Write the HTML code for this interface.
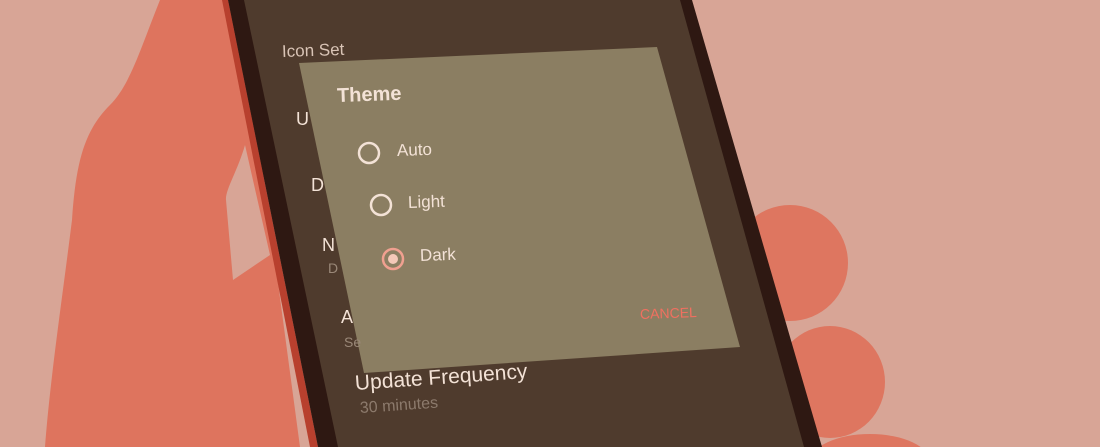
<!DOCTYPE html>
<html><head><style>
html,body{margin:0;padding:0;overflow:hidden}
body{width:1100px;height:447px;overflow:hidden;position:relative;background:#d8a596;font-family:"Liberation Sans",sans-serif}
.t{position:absolute;color:#f3e2d6;white-space:nowrap;transform-origin:left center}
</style></head><body>
<svg width="1100" height="447" style="position:absolute;left:0;top:0">
 <ellipse cx="790" cy="263" rx="58" ry="58" fill="#de7660"/>
 <ellipse cx="830" cy="382" rx="55" ry="56" fill="#de7660"/>
 <ellipse cx="870" cy="462" rx="60" ry="28" fill="#de7660"/>
 <path d="M160,0 L240,0 L300,447 L45,447 C50,380 62,300 72,220 C76,160 85,130 110,105 C130,85 140,50 160,0 Z" fill="#de745e"/>
 <path d="M245,145 C238,170 225,190 226,200 L233,280 L270,255 Z" fill="#d8a596"/>
 <path d="M222,0 L228,0 L318,447 L310,447 Z" fill="#b8402e"/>
 <path d="M228,0 L692,0 L822,447 L318,447 Z" fill="#2e1812"/>
 <path d="M244,0 L680,0 L804,447 L338,447 Z" fill="#4f3b2d"/>
 <path d="M299,63 L657,47 L740,347 L364,373 Z" fill="#8b7e62"/>
</svg>
<div class="t" style="left:282px;top:42px;font-size:17px;color:#d9c4b6;transform:rotate(-2deg)">Icon Set</div>
<div class="t" style="left:296px;top:109px;font-size:18px">U</div>
<div class="t" style="left:311px;top:175px;font-size:18px">D</div>
<div class="t" style="left:322px;top:235px;font-size:18px">N</div>
<div class="t" style="left:328px;top:260px;font-size:14px;color:#9a8878">D</div>
<div class="t" style="left:341px;top:307px;font-size:18px">A</div>
<div class="t" style="left:344px;top:334px;font-size:14px;color:#9a8878">Se</div>
<div class="t" style="left:337px;top:85px;font-size:20px;font-weight:bold;transform:rotate(-2deg)">Theme</div>
<svg width="1100" height="447" style="position:absolute;left:0;top:0">
 <circle cx="369" cy="153" r="10" fill="none" stroke="#f3e2d6" stroke-width="2.5"/>
 <circle cx="381" cy="205" r="10" fill="none" stroke="#f3e2d6" stroke-width="2.5"/>
 <circle cx="393" cy="259" r="10" fill="none" stroke="#f0a090" stroke-width="2.5"/>
 <circle cx="393" cy="259" r="5" fill="#f4c8b8"/>
</svg>
<div class="t" style="left:397px;top:141px;font-size:17px;transform:rotate(-2deg)">Auto</div>
<div class="t" style="left:408px;top:193px;font-size:17px;transform:rotate(-2deg)">Light</div>
<div class="t" style="left:420px;top:246px;font-size:17px;transform:rotate(-2deg)">Dark</div>
<div class="t" style="left:640px;top:306px;font-size:14px;color:#f07060;transform:rotate(-2deg)">CANCEL</div>
<div class="t" style="left:355px;top:372px;font-size:21px;transform:rotate(-4deg)">Update Frequency</div>
<div class="t" style="left:360px;top:400px;font-size:16px;color:#8c7a6c;transform:rotate(-4deg)">30 minutes</div>
</body></html>
